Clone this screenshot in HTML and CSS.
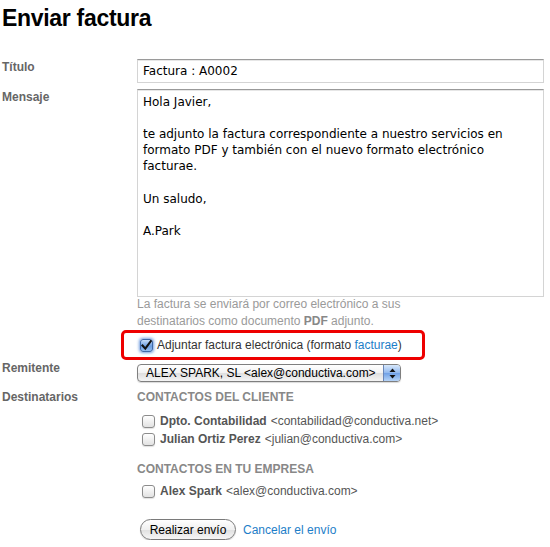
FILE: index.html
```html
<!DOCTYPE html>
<html lang="es">

<head>
    <meta charset="UTF-8">
    <title>Enviar factura</title>
    <link rel="stylesheet" href="styles.css">
</head>

<body>

    <h1 class="page-title">Enviar factura</h1>

    <form class="send-form">

        <!-- Titulo -->
        <div class="form-row">
            <label class="form-label">Título</label>
            <div class="form-field">
                <input class="text-input" type="text" value="Factura : A0002">
            </div>
        </div>

        <!-- Mensaje -->
        <div class="form-row row-message">
            <label class="form-label">Mensaje</label>
            <div class="form-field">
                <textarea class="text-area">Hola Javier,

te adjunto la factura correspondiente a nuestro servicios en formato PDF y también con el nuevo formato electrónico facturae.

Un saludo,

A.Park</textarea>
                <p class="hint">La factura se enviará por correo electrónico a sus destinatarios como documento <strong class="hint-strong">PDF</strong> adjunto.</p>
                <div class="attach-box">
                    <span class="check checked">
                        <svg width="11" height="11" viewBox="0 0 11 11">
                            <path d="M1.5 5.5 L4.3 8.6 L9.8 1.2" fill="none" stroke="#111" stroke-width="2.1" stroke-linecap="square"/>
                        </svg>
                    </span>
                    <span class="attach-text">Adjuntar factura electrónica (formato <a href="#">facturae</a>)</span>
                </div>
            </div>
        </div>

        <!-- Remitente -->
        <div class="form-row row-sender">
            <label class="form-label">Remitente</label>
            <div class="form-field">
                <div class="popup-select">
                    <span class="popup-value">ALEX SPARK, SL &lt;alex@conductiva.com&gt;</span>
                    <span class="popup-arrows">
                        <svg width="7" height="11" viewBox="0 0 7 11">
                            <path d="M3.5 0.5 L6.5 4 L0.5 4 Z" fill="#111"/>
                            <path d="M3.5 10.5 L6.5 7 L0.5 7 Z" fill="#111"/>
                        </svg>
                    </span>
                </div>
            </div>
        </div>

        <!-- Destinatarios -->
        <div class="form-row row-recipients">
            <label class="form-label">Destinatarios</label>
            <div class="form-field">
                <h3 class="group-title">CONTACTOS DEL CLIENTE</h3>
                <ul class="contact-list">
                    <li class="contact"><span class="check"></span><b>Dpto. Contabilidad</b> &lt;contabilidad@conductiva.net&gt;</li>
                    <li class="contact"><span class="check"></span><b>Julian Ortiz Perez</b> &lt;julian@conductiva.com&gt;</li>
                </ul>

                <h3 class="group-title group-company">CONTACTOS EN TU EMPRESA</h3>
                <ul class="contact-list">
                    <li class="contact"><span class="check"></span><b>Alex Spark</b> &lt;alex@conductiva.com&gt;</li>
                </ul>

                <div class="actions">
                    <button class="btn" type="button">Realizar envío</button>
                    <a class="cancel-link" href="#">Cancelar el envío</a>
                </div>
            </div>
        </div>

    </form>

</body>

</html>
```

FILE: styles.css
```css
* {
    margin: 0;
    padding: 0;
    box-sizing: border-box;
}

body {
    padding: 0 2px;
    background: #fff;
    font-family: "Liberation Sans", Arial, sans-serif;
    font-size: 12px;
    line-height: 16px;
    color: #333;
}

a {
    color: #1d7ec8;
    text-decoration: none;
}

/* Title */
.page-title {
    margin-top: 5px;
    font-size: 23px;
    line-height: 26px;
    font-weight: bold;
    letter-spacing: -0.3px;
    color: #000;
}

.send-form {
    margin-top: 28px;
}

/* Rows */
.form-row {
    display: grid;
    grid-template-columns: 135px 1fr;
}

.form-label {
    font-weight: bold;
    color: #666;
}

.row-message {
    margin-top: 6px;
}

.row-sender {
    margin-top: 0;
}

.row-recipients {
    margin-top: 7px;
}

/* Inputs */
.text-input,
.text-area {
    display: block;
    width: 407px;
    font-family: "DejaVu Sans", Verdana, sans-serif;
    font-size: 12px;
    color: #000;
    border: 1px solid #d4d4d4;
    border-top-color: #9a9a9a;
    box-shadow: inset 0 1px 0 #e6e6e6;
    background: #fff;
    outline: none;
}

.text-input {
    height: 24px;
    padding: 0 5px;
}

.text-area {
    height: 208px;
    padding: 4px 5px;
    line-height: 16.1px;
    resize: none;
    overflow: hidden;
}

.hint {
    width: 270px;
    margin-top: -1px;
    line-height: 17px;
    color: #9a9a9a;
}

.hint-strong {
    font-weight: bold;
    color: #888;
}

/* Red highlighted attach option */
.attach-box {
    display: inline-flex;
    align-items: center;
    margin-left: -16px;
    height: 30px;
    padding: 0 20px 0 16px;
    border: 3px solid #ee0000;
    border-radius: 5px;
}

.attach-text {
    margin-left: 4px;
    color: #333;
}

/* Checkboxes */
.check {
    display: inline-flex;
    align-items: center;
    justify-content: center;
    width: 13px;
    height: 13px;
    border: 1px solid #8c8c8c;
    border-radius: 3px;
    background: linear-gradient(#ffffff, #e2e2e2);
    box-shadow: 0 1px 1px rgba(0, 0, 0, 0.12);
    flex-shrink: 0;
}

.check.checked {
    border-color: #3f69a8;
    background: linear-gradient(#c6dcf7, #6d9ee0 55%, #93bdf0);
    box-shadow: 0 0 3px 1px rgba(60, 120, 210, 0.7);
}

/* Popup select */
.popup-select {
    display: flex;
    width: 264px;
    height: 18px;
    margin-top: 4px;
    border: 1px solid #7f7f7f;
    border-radius: 4px;
    background: linear-gradient(#ffffff, #f2f2f2 50%, #dedede 51%, #f4f4f4);
    overflow: hidden;
    box-shadow: 0 1px 1px rgba(0, 0, 0, 0.15);
}

.popup-value {
    flex: 1;
    padding-left: 8px;
    line-height: 16px;
    color: #000;
}

.popup-arrows {
    display: flex;
    align-items: center;
    justify-content: center;
    width: 17px;
    border-left: 1px solid #6a86b8;
    background: linear-gradient(#d8e8fb, #8fb7ee 50%, #6fa0e6 51%, #b6d4f7);
}

/* Recipients */
.group-title {
    font-size: 12px;
    font-weight: bold;
    color: #888;
}

.group-company {
    margin-top: 13px;
}

.contact-list {
    list-style: none;
    margin-top: 7px;
}

.group-company + .contact-list {
    margin-top: 5px;
}

.contact {
    display: flex;
    align-items: center;
    height: 18px;
    padding-left: 5px;
    color: #555;
}

.contact .check {
    margin-right: 5px;
}

.contact b {
    margin-right: 4px;
}

/* Actions */
.actions {
    display: flex;
    align-items: center;
    margin-top: 19px;
    padding-left: 3px;
}

.btn {
    height: 21px;
    width: 96px;
    border: 1px solid #7a7a7a;
    border-radius: 11px;
    background: linear-gradient(#ffffff, #f0f0f0 50%, #e0e0e0 51%, #f6f6f6);
    font-family: "Liberation Sans", Arial, sans-serif;
    font-size: 12px;
    color: #000;
    box-shadow: 0 1px 1px rgba(0, 0, 0, 0.15);
}

.cancel-link {
    margin-left: 7px;
}
```
